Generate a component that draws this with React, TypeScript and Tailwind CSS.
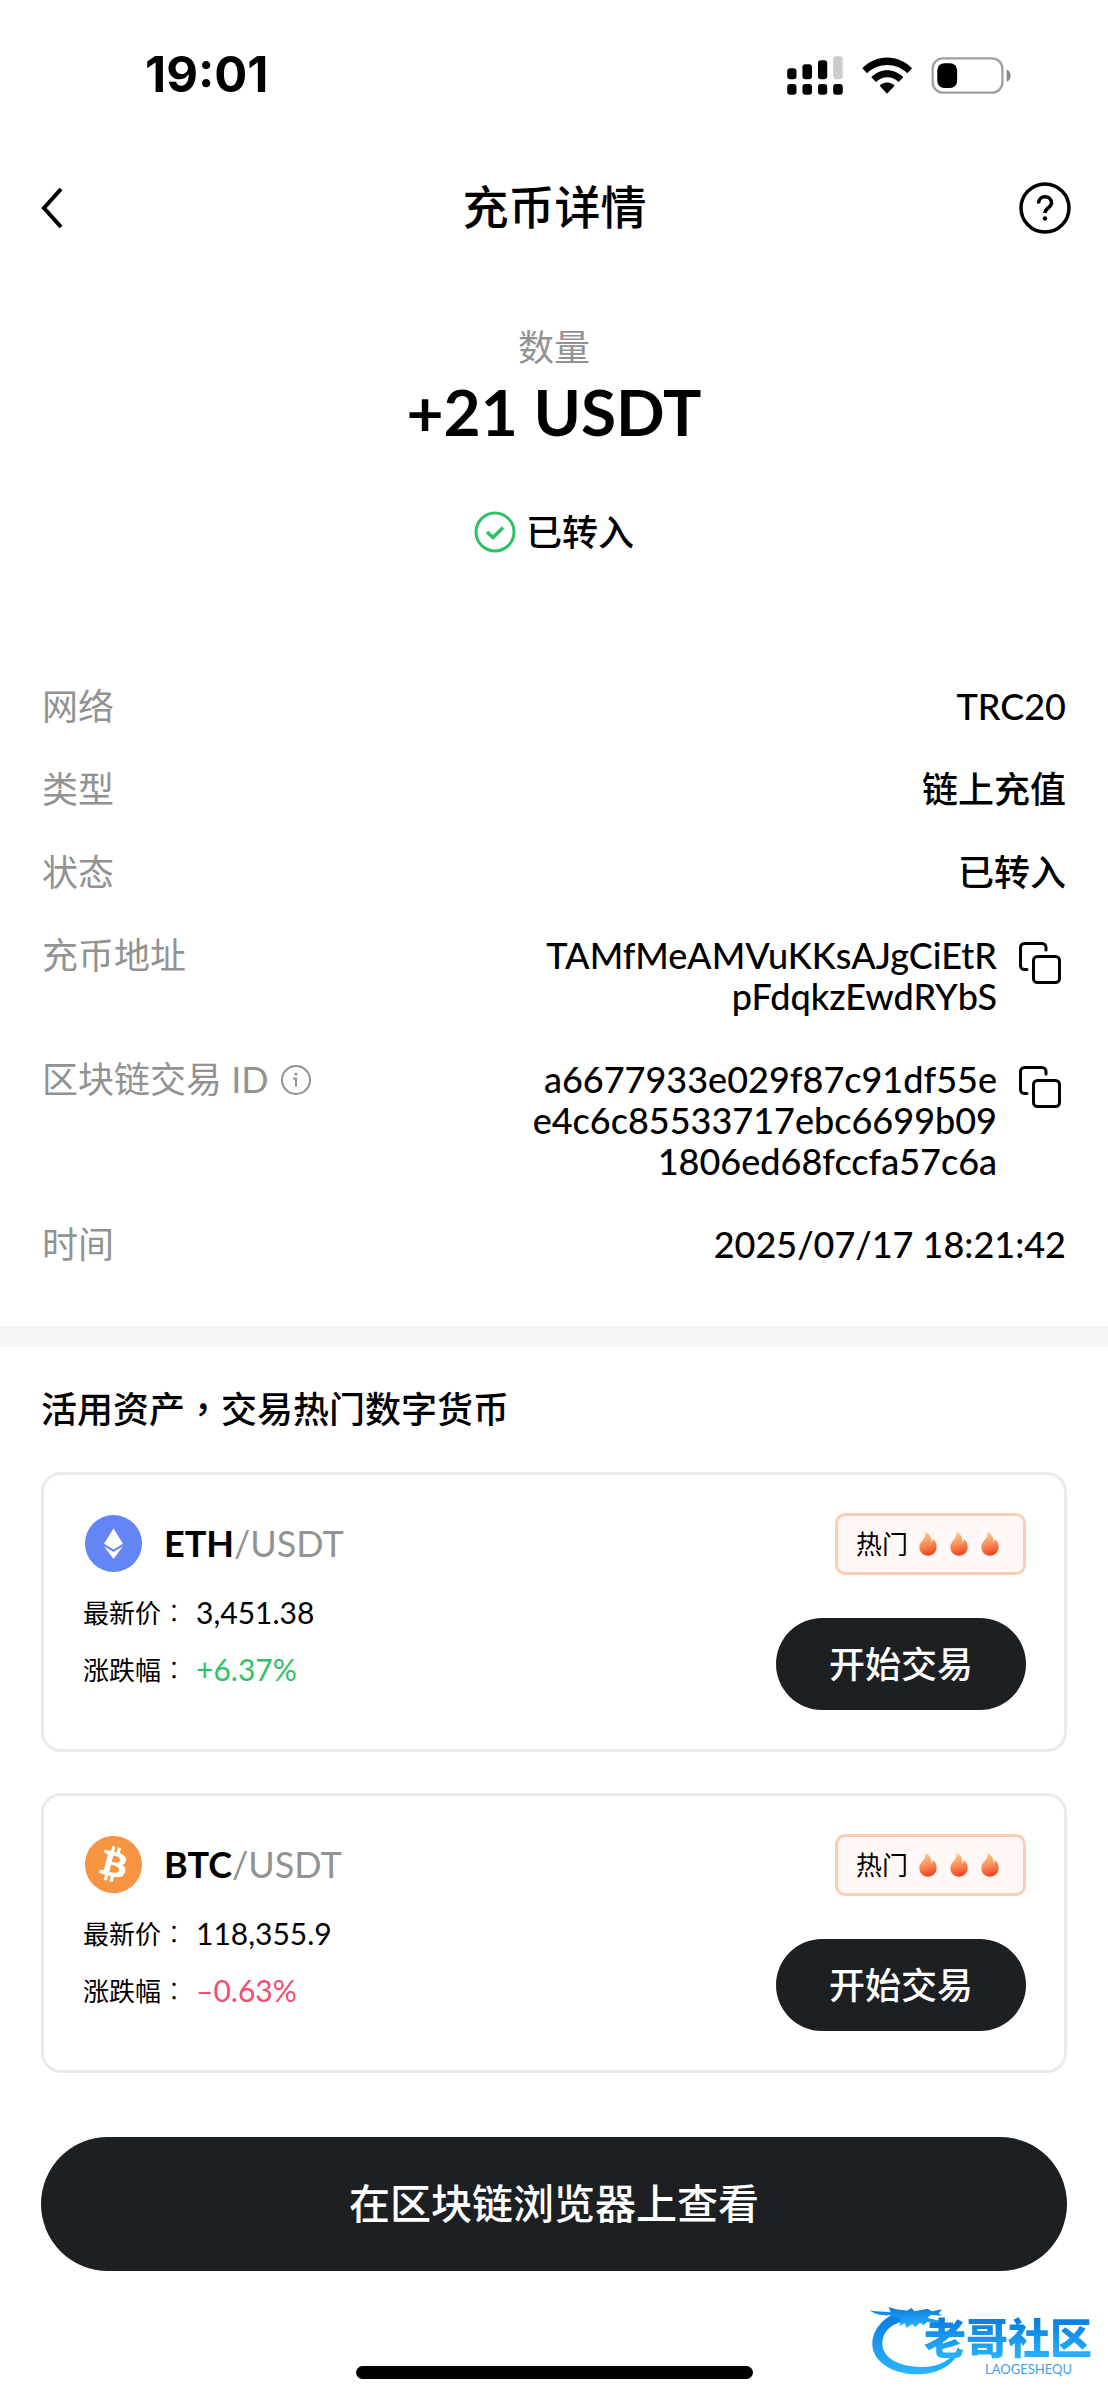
import * as React from "react"
import { SiBitcoin } from "react-icons/si"

interface Market {
  base: string
  price: string
  change: string
  up: boolean
  icon: React.ReactNode
}

function SignalIcon() {
  return (
    <svg viewBox="50 44 168 118" className="h-[39px] w-[56px]" aria-hidden="true">
      <rect x="50" y="81" width="28" height="33" rx="9" />
      <rect x="96" y="69" width="29" height="45" rx="9" />
      <rect x="143" y="57" width="28" height="57" rx="9" />
      <rect x="189" y="45" width="29" height="69" rx="9" fill="#cccccc" />
      <rect x="50" y="129" width="28" height="32" rx="9" />
      <rect x="96" y="129" width="29" height="32" rx="9" />
      <rect x="143" y="129" width="28" height="32" rx="9" />
      <rect x="189" y="129" width="29" height="32" rx="9" />
    </svg>
  )
}

function WifiIcon() {
  return (
    <svg viewBox="275 46 150 111" className="h-[37px] w-[50px]" aria-hidden="true">
      <path d="M276 80C317 37 384 37 425 80L411 95C377 62 324 62 290 95Z" />
      <path d="M303 107C330 79 371 79 399 107L385 121C366 102 336 102 317 121Z" />
      <path d="M328 132C341 119 360 119 373 132L350 156Z" />
    </svg>
  )
}

function BatteryIcon() {
  return (
    <svg viewBox="483 46 240 112" className="h-[37px] w-[80px]" aria-hidden="true">
      <rect x="487" y="50" width="211" height="104" rx="31" fill="none" stroke="#a0a0a0" strokeWidth="7" />
      <rect x="501" y="65" width="60" height="75" rx="21" />
      <path d="M711 84C727 90 727 115 711 121Z" fill="#888888" />
    </svg>
  )
}

function CopyIcon() {
  return (
    <svg viewBox="0 0 42 42" className="size-[42px]" fill="none" stroke="currentColor" strokeWidth="3" aria-hidden="true">
      <path d="M8 27.5H5.5a4 4 0 0 1-4-4v-18a4 4 0 0 1 4-4H23a4 4 0 0 1 4 4V8" strokeLinecap="round" />
      <rect x="14.5" y="14.5" width="26" height="26" rx="4" />
    </svg>
  )
}

function EthIcon() {
  return (
    <svg viewBox="0 0 57 57" className="size-[57px]" aria-hidden="true">
      <circle cx="28.5" cy="28.5" r="28.5" fill="#6385f6" />
      <path d="M28.5 13.5L38 28.8L28.5 34.6L19 28.8Z" fill="#fff" />
      <path d="M19 31.2L28.5 37L38 31.2L28.5 44Z" fill="#fff" />
    </svg>
  )
}

function Flame() {
  const id = React.useId()
  return (
    <svg viewBox="0 0 54 72" className="h-6 w-[18px]" aria-hidden="true">
      <defs>
        <linearGradient id={id} x1="0.4" y1="0" x2="0.6" y2="1">
          <stop offset="0" stopColor="#fecb85" />
          <stop offset="0.5" stopColor="#f88e5a" />
          <stop offset="1" stopColor="#ee3f1d" />
        </linearGradient>
      </defs>
      <path
        d="M19 1C31 5 39 17 37 33C40 31 40 26 41 22C48 25 53 33 53 44C53 60 41 71 27 71C12 71 1 60 1 45C1 27 22 23 19 1Z"
        fill={`url(#${id})`}
      />
    </svg>
  )
}

function DragonMark() {
  return (
    <svg viewBox="84 50 276 234" className="h-[78px] w-[92px]" aria-hidden="true">
      <defs>
        <linearGradient id="dragon" x1="0" y1="0" x2="0" y2="1">
          <stop offset="0" stopColor="#0879dd" />
          <stop offset="1" stopColor="#2bb5ff" />
        </linearGradient>
      </defs>
      <g fill="url(#dragon)">
        <path d="M205 88C140 92 96 140 97 190C99 245 165 281 240 279C305 277 356 240 356 198C335 240 290 259 240 257C172 255 125 228 127 183C129 150 155 122 205 118Z" />
        <path d="M90 87C110 92 130 90 152 93L146 76C165 86 185 84 200 88L214 80L224 90L262 82L276 90L306 84L296 96L306 103L272 101L262 110L300 118L298 129L262 121L252 131L240 124L226 137L216 128L200 140L194 126L178 134L182 112L150 102C128 104 104 100 90 87Z" />
      </g>
    </svg>
  )
}

function DetailRow({ label, children }: { label: React.ReactNode; children: React.ReactNode }) {
  return (
    <div className="flex items-start justify-between">
      <dt className="flex items-center gap-3 text-[#929292]">{label}</dt>
      <dd className="flex items-start gap-[22px] text-right font-medium">{children}</dd>
    </div>
  )
}

function CopyableValue({ lines, label }: { lines: string[]; label: string }) {
  return (
    <>
      <span>
        {lines.map((line) => (
          <span key={line} className="block">{line}</span>
        ))}
      </span>
      <button type="button" aria-label={label} className="mt-[7px] mr-[5px]">
        <CopyIcon />
      </button>
    </>
  )
}

function MarketCard({ base, price, change, up, icon }: Market) {
  return (
    <article className="flex justify-between rounded-[20px] border-[3px] border-[#ebebeb] pt-[38px] pr-[38px] pb-[39px] pl-[39px]">
      <div>
        <div className="mb-[11px] flex h-[60px] items-center gap-[22px] pl-[2px]">
          {icon}
          <h3 className="text-[36px] leading-[48px] text-[#929292]">
            <span className="font-bold text-black">{base}</span>/USDT
          </h3>
        </div>
        <dl className="leading-[57px]">
          <div className="flex h-[57px] items-center gap-[9px]">
            <dt className="text-[26px]">
              最新价<span className="font-['Noto_Sans_CJK_TC',sans-serif] font-light">：</span>
            </dt>
            <dd className="text-[30px]">{price}</dd>
          </div>
          <div className="flex h-[57px] items-center gap-[9px]">
            <dt className="text-[26px]">
              涨跌幅<span className="font-['Noto_Sans_CJK_TC',sans-serif] font-light">：</span>
            </dt>
            <dd className={up ? "text-[30px] text-[#2fc166]" : "text-[30px] text-[#ef4f72]"}>{change}</dd>
          </div>
        </dl>
      </div>
      <div className="flex flex-col items-end gap-[43px]">
        <div className="flex h-[62px] items-center rounded-[10px] border-[3px] border-[#fdcdb3] bg-[#fff8f6] pr-6 pl-[18px]">
          <span className="mr-[11px] text-[26px]">热门</span>
          <span className="flex gap-[13px]">
            <Flame />
            <Flame />
            <Flame />
          </span>
        </div>
        <button type="button" className="h-[92px] w-[250px] rounded-full bg-[#1d2023] text-[36px] font-medium text-white">
          开始交易
        </button>
      </div>
    </article>
  )
}

const markets: Market[] = [
  { base: "ETH", price: "3,451.38", change: "+6.37%", up: true, icon: <EthIcon /> },
  {
    base: "BTC",
    price: "118,355.9",
    change: "–0.63%",
    up: false,
    icon: <SiBitcoin className="size-[57px] text-[#f69441]" aria-hidden="true" />
  }
]

export default function App() {
  return (
    <div className="relative flex min-h-screen flex-col bg-white font-['Lato','Noto_Sans_CJK_SC',sans-serif] text-black">
      <div className="flex h-[150px] items-center justify-between pr-[97px] pl-[145px]">
        <span className="font-['Inter',sans-serif] text-[49px] font-bold">19:01</span>
        <div className="flex items-center gap-[19px]">
          <SignalIcon />
          <WifiIcon />
          <BatteryIcon />
        </div>
      </div>

      <header className="flex h-[116px] items-center justify-between pr-[37px] pl-[40px]">
        <button type="button" aria-label="返回" className="w-[50px]">
          <svg viewBox="0 0 24 42" className="h-[42px] w-6" fill="none" stroke="currentColor" strokeWidth="4">
            <path d="M21 2L4 21L21 40" />
          </svg>
        </button>
        <h1 className="pb-1 text-[46px] font-medium">充币详情</h1>
        <button type="button" aria-label="帮助">
          <svg viewBox="0 0 52 52" className="size-[52px]" fill="none" stroke="currentColor" strokeWidth="3.5">
            <circle cx="26" cy="26" r="24" />
            <path d="M19.5 21.5C19.5 12.5 32.5 12.5 32.5 21C32.5 26 26 25.5 26 31" />
            <circle cx="26" cy="36.5" r="2.2" fill="currentColor" stroke="none" />
          </svg>
        </button>
      </header>

      <section className="flex flex-col items-center pt-14">
        <p className="text-[36px] leading-[50px] text-[#929292]">数量</p>
        <p className="text-[64px] leading-[80px] font-bold">+21 USDT</p>
        <p className="mt-[55px] flex items-center gap-[10px] text-[36px] leading-[50px] font-medium">
          <svg viewBox="0 0 42 42" className="size-[42px]" fill="none" stroke="#2fc166" strokeWidth="3" aria-hidden="true">
            <circle cx="21" cy="21" r="19" />
            <path d="M13 21L19 26.5L29 16.5" strokeWidth="3.5" />
          </svg>
          已转入
        </p>
      </section>

      <dl className="mt-[129px] flex flex-col gap-[42px] px-[42px] text-[36px] leading-[41px]">
        <DetailRow label="网络">TRC20</DetailRow>
        <DetailRow label="类型">链上充值</DetailRow>
        <DetailRow label="状态">已转入</DetailRow>
        <DetailRow label="充币地址">
          <CopyableValue label="复制地址" lines={["TAMfMeAMVuKKsAJgCiEtR", "pFdqkzEwdRYbS"]} />
        </DetailRow>
        <DetailRow
          label={
            <>
              区块链交易 ID
              <svg viewBox="0 0 30 30" className="size-[30px]" fill="none" stroke="currentColor" strokeWidth="2" aria-hidden="true">
                <circle cx="15" cy="15" r="14" />
                <path d="M12 13.5H15V21.5" />
                <circle cx="15" cy="9" r="1.6" fill="currentColor" stroke="none" />
              </svg>
            </>
          }
        >
          <CopyableValue
            label="复制交易 ID"
            lines={["a6677933e029f87c91df55e", "e4c6c85533717ebc6699b09", "1806ed68fccfa57c6a"]}
          />
        </DetailRow>
        <DetailRow label="时间">2025/07/17 18:21:42</DetailRow>
      </dl>

      <hr className="mt-[61px] h-[21px] border-0 bg-[#f5f5f5]" />

      <section className="px-[41px] pt-[34px]">
        <h2 className="text-[36px] leading-[52px] font-medium">
          活用资产<span className="font-['Noto_Sans_CJK_TC',sans-serif]">，</span>交易热门数字货币
        </h2>
        <div className="mt-[37px] flex flex-col gap-[41px]">
          {markets.map((market) => (
            <MarketCard key={market.base} {...market} />
          ))}
        </div>
        <button type="button" className="mt-16 h-[134px] w-full rounded-full bg-[#1d2023] text-[41px] font-medium text-white">
          在区块链浏览器上查看
        </button>
      </section>

      <div className="mx-auto mt-auto mb-[21px] h-[13px] w-[397px] rounded-full bg-black" />

      {/* watermark */}
      <div className="absolute right-4 bottom-6 flex h-[78px] w-[224px] flex-col items-end pt-[18px]">
        <div className="absolute top-0 left-0">
          <DragonMark />
        </div>
        <span className="relative bg-linear-to-b from-[#0879dd] to-[#2bb5ff] bg-clip-text text-[42px] leading-[44px] font-black text-transparent">
          老哥社区
        </span>
        <span className="relative mr-5 text-[13px] leading-[18px] text-[#3f9fe8]">LAOGESHEQU</span>
      </div>
    </div>
  )
}
